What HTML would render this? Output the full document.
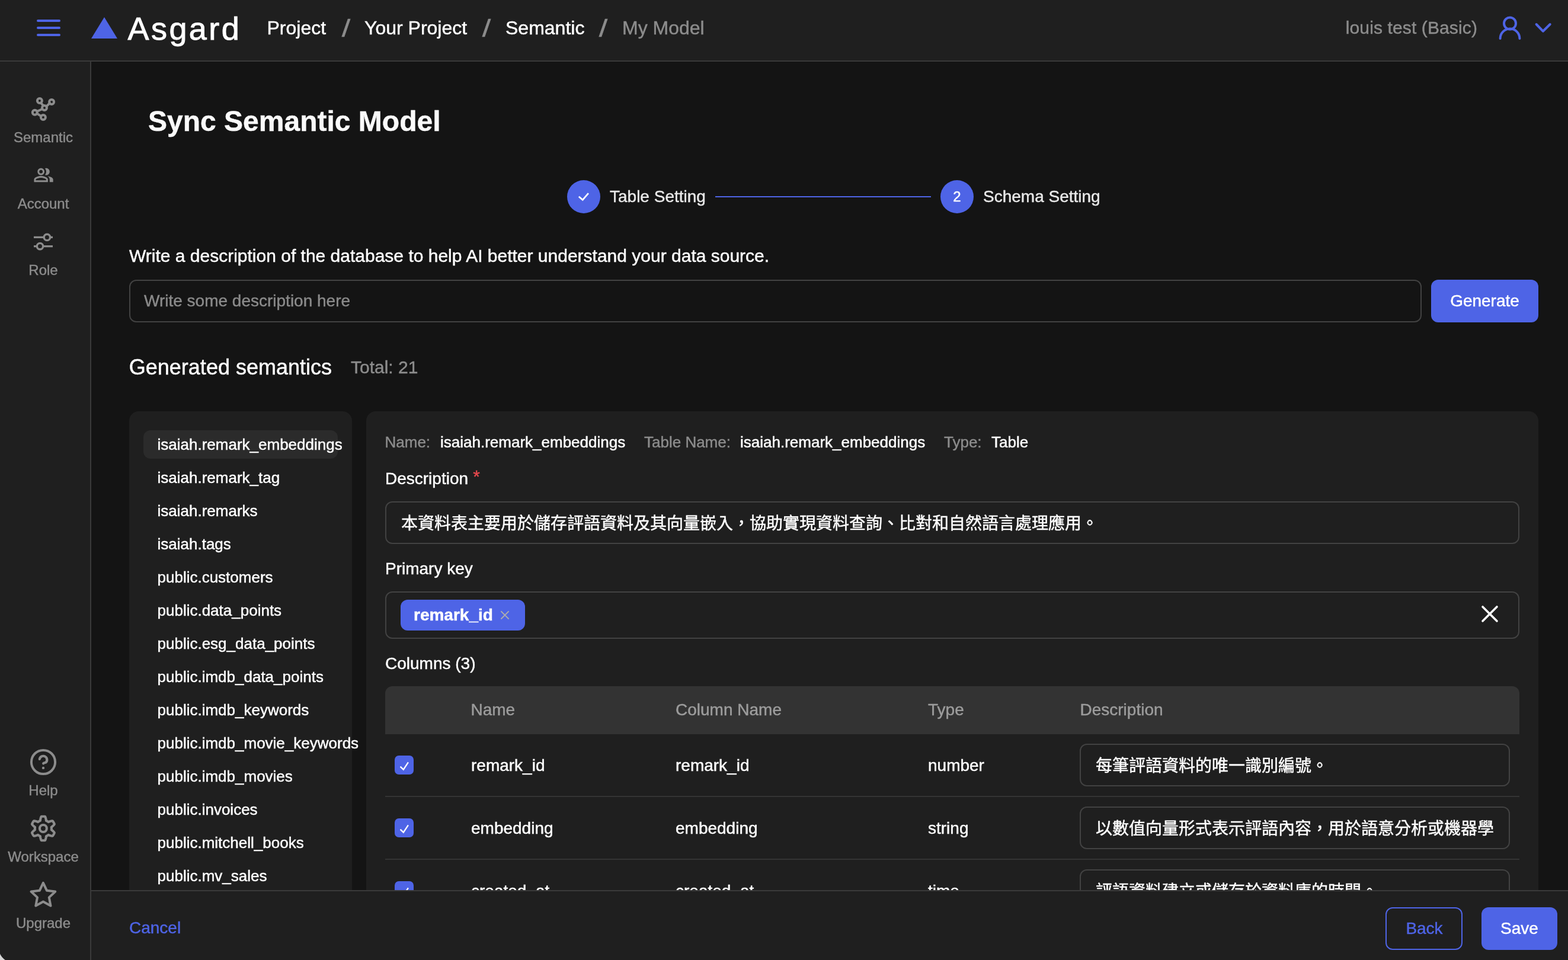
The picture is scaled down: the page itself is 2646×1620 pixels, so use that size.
<!DOCTYPE html>
<html lang="en">
<head>
<meta charset="utf-8">
<title>Asgard - Sync Semantic Model</title>
<style>
*{box-sizing:border-box;margin:0;padding:0}
html,body{width:2646px;height:1620px;overflow:hidden;background:#141414;}
body{position:relative;font-family:"Liberation Sans", "Noto Sans CJK TC", sans-serif;color:#fff;-webkit-font-smoothing:antialiased;}
.t{position:absolute;white-space:nowrap;-webkit-text-stroke:0.45px;}
.b{position:absolute;}
svg{position:absolute;overflow:visible}
.inp{border:2px solid #424242;border-radius:12px;}
</style>
</head>
<body>
<div id="app" style="position:absolute;left:0;top:0;width:2646px;height:1620px;will-change:transform;">

<main>
<div class="b" style="left:957px;top:304px;width:56px;height:56px;border-radius:50%;background:#4e64e6"></div>
<svg style="left:957px;top:304px" width="56" height="56" viewBox="0 0 56 56"><path d="M19.8 27.8 L26.2 33.3 L35.9 22.2" fill="none" stroke="#fff" stroke-width="2.8" stroke-linecap="butt" stroke-linejoin="miter"/></svg>
<div class="t " style="top:310.90px;font-size:28px;line-height:42px;color:#e8e8e8;left:1029px;">Table Setting</div>
<div class="b " style="left:1207px;top:331px;width:364px;height:2px;background:#4e64e6"></div>
<div class="b" style="left:1587px;top:304px;width:56px;height:56px;border-radius:50%;background:#4e64e6"></div>
<div class="t " style="top:314.28px;font-size:24px;line-height:36px;color:#fff;left:1215px;width:800px;text-align:center;">2</div>
<div class="t " style="top:310.90px;font-size:28px;line-height:42px;color:#e8e8e8;left:1659px;">Schema Setting</div>
<div class="t " style="top:168.97px;font-size:48px;line-height:72px;color:#fafafa;font-weight:700;left:250px;">Sync Semantic Model</div>
<div class="t " style="top:409.41px;font-size:30px;line-height:45px;color:#fff;left:218px;">Write a description of the database to help AI better understand your data source.</div>
<div class="b inp" style="left:218px;top:472px;width:2181px;height:72px;"></div>
<div class="t " style="top:487.10px;font-size:28px;line-height:42px;color:#8a8a8a;left:243px;">Write some description here</div>
<div class="b " style="left:2415px;top:472px;width:181px;height:72px;background:#4e64e6;border-radius:12px"></div>
<div class="t " style="top:486.70px;font-size:28px;line-height:42px;color:#fff;left:2105.5px;width:800px;text-align:center;">Generate</div>
<div class="t " style="top:593.03px;font-size:36px;line-height:54px;color:#fff;left:217.8px;">Generated semantics</div>
<div class="t " style="top:597.11px;font-size:30px;line-height:45px;color:#8c8c8c;left:592px;">Total: 21</div>
<div class="b " style="left:218px;top:694px;width:376px;height:900px;background:#1f1f1f;border-radius:16px"></div>
<div class="b " style="left:242px;top:726px;width:328px;height:48px;background:#2b2b2b;border-radius:12px"></div>
<div class="t " style="top:731.49px;font-size:26px;line-height:39px;color:#fff;left:265.5px;">isaiah.remark_embeddings</div>
<div class="t " style="top:787.49px;font-size:26px;line-height:39px;color:#fff;left:265.5px;">isaiah.remark_tag</div>
<div class="t " style="top:843.49px;font-size:26px;line-height:39px;color:#fff;left:265.5px;">isaiah.remarks</div>
<div class="t " style="top:899.49px;font-size:26px;line-height:39px;color:#fff;left:265.5px;">isaiah.tags</div>
<div class="t " style="top:955.49px;font-size:26px;line-height:39px;color:#fff;left:265.5px;">public.customers</div>
<div class="t " style="top:1011.49px;font-size:26px;line-height:39px;color:#fff;left:265.5px;">public.data_points</div>
<div class="t " style="top:1067.49px;font-size:26px;line-height:39px;color:#fff;left:265.5px;">public.esg_data_points</div>
<div class="t " style="top:1123.49px;font-size:26px;line-height:39px;color:#fff;left:265.5px;">public.imdb_data_points</div>
<div class="t " style="top:1179.49px;font-size:26px;line-height:39px;color:#fff;left:265.5px;">public.imdb_keywords</div>
<div class="t " style="top:1235.49px;font-size:26px;line-height:39px;color:#fff;left:265.5px;">public.imdb_movie_keywords</div>
<div class="t " style="top:1291.49px;font-size:26px;line-height:39px;color:#fff;left:265.5px;">public.imdb_movies</div>
<div class="t " style="top:1347.49px;font-size:26px;line-height:39px;color:#fff;left:265.5px;">public.invoices</div>
<div class="t " style="top:1403.49px;font-size:26px;line-height:39px;color:#fff;left:265.5px;">public.mitchell_books</div>
<div class="t " style="top:1459.49px;font-size:26px;line-height:39px;color:#fff;left:265.5px;">public.mv_sales</div>
<div class="t " style="top:1515.49px;font-size:26px;line-height:39px;color:#fff;left:265.5px;">public.orders</div>
<div class="b " style="left:618px;top:694px;width:1978px;height:900px;background:#1f1f1f;border-radius:16px"></div>
<div class="t " style="top:726.79px;font-size:26px;line-height:39px;color:#8c8c8c;left:649.5px;">Name:</div>
<div class="t " style="top:726.79px;font-size:26px;line-height:39px;color:#fff;left:743px;">isaiah.remark_embeddings</div>
<div class="t " style="top:726.79px;font-size:26px;line-height:39px;color:#8c8c8c;left:1087px;">Table Name:</div>
<div class="t " style="top:726.79px;font-size:26px;line-height:39px;color:#fff;left:1249px;">isaiah.remark_embeddings</div>
<div class="t " style="top:726.79px;font-size:26px;line-height:39px;color:#8c8c8c;left:1593px;">Type:</div>
<div class="t " style="top:726.79px;font-size:26px;line-height:39px;color:#fff;left:1673px;">Table</div>
<div class="t " style="top:787.10px;font-size:28px;line-height:42px;color:#fff;left:650px;">Description</div>
<div class="t " style="top:781.31px;font-size:30px;line-height:45px;color:#e5484d;left:798.3px;">*</div>
<div class="b inp" style="left:650px;top:846px;width:1914px;height:72px;"></div>
<div class="t " style="top:863.00px;font-size:28px;line-height:42px;color:#fff;left:677px;">本資料表主要用於儲存評語資料及其向量嵌入，協助實現資料查詢、比對和自然語言處理應用。</div>
<div class="t " style="top:939.10px;font-size:28px;line-height:42px;color:#fff;left:650px;">Primary key</div>
<div class="b inp" style="left:650px;top:998px;width:1914px;height:80px;"></div>
<div class="b " style="left:676px;top:1012px;width:210px;height:52px;background:#4e64e6;border-radius:12px"></div>
<div class="t " style="top:1017.10px;font-size:28px;line-height:42px;color:#fff;font-weight:700;left:698px;">remark_id</div>
<svg style="left:845px;top:1031px" width="14" height="14" viewBox="0 0 14 14"><path d="M0.4 0.4 L13.6 13.6 M13.6 0.4 L0.4 13.6" stroke="#adadad" stroke-width="2" fill="none"/></svg>
<svg style="left:2500px;top:1022px" width="28" height="28" viewBox="0 0 28 28"><path d="M2 2 L26 26 M26 2 L2 26" stroke="#fff" stroke-width="3.6" stroke-linecap="round" fill="none"/></svg>
<div class="t " style="top:1098.90px;font-size:28px;line-height:42px;color:#fff;left:650px;">Columns (3)</div>
<div class="b " style="left:650px;top:1158px;width:1914px;height:81px;background:#333;border-radius:12px 12px 0 0"></div>
<div class="t " style="top:1176.60px;font-size:28px;line-height:42px;color:#9c9c9c;left:794.5px;">Name</div>
<div class="t " style="top:1176.60px;font-size:28px;line-height:42px;color:#9c9c9c;left:1140px;">Column Name</div>
<div class="t " style="top:1176.60px;font-size:28px;line-height:42px;color:#9c9c9c;left:1566px;">Type</div>
<div class="t " style="top:1176.60px;font-size:28px;line-height:42px;color:#9c9c9c;left:1822.5px;">Description</div>
<div class="b " style="left:650px;top:1343px;width:1914px;height:2px;background:#343434"></div>
<div class="b " style="left:666px;top:1275px;width:32px;height:32px;background:#4e64e6;border-radius:7px"></div>
<svg style="left:666px;top:1275px" width="32" height="32" viewBox="0 0 32 32"><path d="M9.5 18.7 L14.8 23.7 L22.9 11.3" fill="none" stroke="#fff" stroke-width="2.3"/></svg>
<div class="t " style="top:1270.50px;font-size:28px;line-height:42px;color:#fff;left:795px;">remark_id</div>
<div class="t " style="top:1270.50px;font-size:28px;line-height:42px;color:#fff;left:1140px;">remark_id</div>
<div class="t " style="top:1270.50px;font-size:28px;line-height:42px;color:#fff;left:1566px;">number</div>
<div class="b inp" style="left:1822px;top:1255px;width:726px;height:72px;overflow:hidden"></div>
<div class="t " style="top:1272.00px;font-size:28px;line-height:42px;color:#fff;left:1849px;">每筆評語資料的唯一識別編號。</div>
<div class="b " style="left:650px;top:1449px;width:1914px;height:2px;background:#343434"></div>
<div class="b " style="left:666px;top:1381px;width:32px;height:32px;background:#4e64e6;border-radius:7px"></div>
<svg style="left:666px;top:1381px" width="32" height="32" viewBox="0 0 32 32"><path d="M9.5 18.7 L14.8 23.7 L22.9 11.3" fill="none" stroke="#fff" stroke-width="2.3"/></svg>
<div class="t " style="top:1376.50px;font-size:28px;line-height:42px;color:#fff;left:795px;">embedding</div>
<div class="t " style="top:1376.50px;font-size:28px;line-height:42px;color:#fff;left:1140px;">embedding</div>
<div class="t " style="top:1376.50px;font-size:28px;line-height:42px;color:#fff;left:1566px;">string</div>
<div class="b inp" style="left:1822px;top:1361px;width:726px;height:72px;overflow:hidden"></div>
<div class="t " style="top:1378.00px;font-size:28px;line-height:42px;color:#fff;left:1849px;">以數值向量形式表示評語內容，用於語意分析或機器學</div>
<div class="b " style="left:650px;top:1555px;width:1914px;height:2px;background:#343434"></div>
<div class="b " style="left:666px;top:1487px;width:32px;height:32px;background:#4e64e6;border-radius:7px"></div>
<svg style="left:666px;top:1487px" width="32" height="32" viewBox="0 0 32 32"><path d="M9.5 18.7 L14.8 23.7 L22.9 11.3" fill="none" stroke="#fff" stroke-width="2.3"/></svg>
<div class="t " style="top:1482.50px;font-size:28px;line-height:42px;color:#fff;left:795px;">created_at</div>
<div class="t " style="top:1482.50px;font-size:28px;line-height:42px;color:#fff;left:1140px;">created_at</div>
<div class="t " style="top:1482.50px;font-size:28px;line-height:42px;color:#fff;left:1566px;">time</div>
<div class="b inp" style="left:1822px;top:1467px;width:726px;height:72px;overflow:hidden"></div>
<div class="t " style="top:1484.00px;font-size:28px;line-height:42px;color:#fff;left:1849px;">評語資料建立或儲存於資料庫的時間。</div>
</main>
<footer>
<div class="b " style="left:154px;top:1502px;width:2492px;height:118px;background:#1f1f1f;border-top:2px solid #3a3a3a"></div>
<div class="t " style="top:1545.40px;font-size:28px;line-height:42px;color:#4e64e6;left:218px;">Cancel</div>
<div class="b " style="left:2338px;top:1531px;width:130px;height:72px;border:2px solid #4e64e6;border-radius:12px"></div>
<div class="t " style="top:1545.80px;font-size:28px;line-height:42px;color:#4e64e6;left:2003.5px;width:800px;text-align:center;">Back</div>
<div class="b " style="left:2500px;top:1531px;width:128px;height:72px;background:#4e64e6;border-radius:12px"></div>
<div class="t " style="top:1545.80px;font-size:28px;line-height:42px;color:#fff;left:2164px;width:800px;text-align:center;">Save</div>
</footer>
<header>
<div class="b " style="left:0px;top:0px;width:2646px;height:104px;background:#1f1f1f;border-bottom:2px solid #3a3a3a"></div>
<div class="b " style="left:62px;top:33px;width:40px;height:4px;background:#4e64e6;border-radius:2px"></div>
<div class="b " style="left:62px;top:45px;width:40px;height:4px;background:#4e64e6;border-radius:2px"></div>
<div class="b " style="left:62px;top:57px;width:40px;height:4px;background:#4e64e6;border-radius:2px"></div>
<svg style="left:154px;top:29px" width="44" height="36" viewBox="0 0 44 36"><path d="M22 0 L44 36 L0 36 Z" fill="#4e64e6"/></svg>
<div class="t " style="top:8.39px;font-size:54px;line-height:81px;color:#fff;left:215.6px;letter-spacing:3.4px;-webkit-text-stroke:0.9px #fff;">Asgard</div>
<div class="t " style="top:22.91px;font-size:32px;line-height:48px;color:#fff;left:450.5px;">Project</div>
<div class="t " style="top:22.91px;font-size:32px;line-height:48px;color:#fff;left:615px;">Your Project</div>
<div class="t " style="top:22.91px;font-size:32px;line-height:48px;color:#fff;left:853px;">Semantic</div>
<div class="t " style="top:22.91px;font-size:32px;line-height:48px;color:#8c8c8c;left:1050px;">My Model</div>
<div class="t " style="top:17.64px;font-size:40px;line-height:60px;color:#8c8c8c;left:184px;width:800px;text-align:center;transform:scaleX(1.3);-webkit-text-stroke:0.5px #8c8c8c;">/</div>
<div class="t " style="top:17.64px;font-size:40px;line-height:60px;color:#8c8c8c;left:421px;width:800px;text-align:center;transform:scaleX(1.3);-webkit-text-stroke:0.5px #8c8c8c;">/</div>
<div class="t " style="top:17.64px;font-size:40px;line-height:60px;color:#8c8c8c;left:618px;width:800px;text-align:center;transform:scaleX(1.3);-webkit-text-stroke:0.5px #8c8c8c;">/</div>
<div class="t " style="top:24.11px;font-size:30px;line-height:45px;color:#8c8c8c;right:153px;letter-spacing:0.12px;">louis test (Basic)</div>
<svg style="left:2526px;top:23px" width="44" height="48" viewBox="0 0 44 48"><circle cx="22" cy="16.5" r="10" fill="none" stroke="#4e64e6" stroke-width="4"/><path d="M5.6 42 A16.4 16.4 0 0 1 38.4 42" fill="none" stroke="#4e64e6" stroke-width="4" stroke-linecap="round"/></svg>
<svg style="left:2588px;top:36px" width="32" height="22" viewBox="0 0 32 22"><path d="M4.6 5 L15.8 16.7 L27.7 5" fill="none" stroke="#4e64e6" stroke-width="4" stroke-linecap="round" stroke-linejoin="round"/></svg>
</header>
<aside>
<div class="b " style="left:0px;top:104px;width:154px;height:1516px;background:#1f1f1f;border-right:2px solid #3a3a3a"></div>
<svg style="left:0px;top:130px" width="152" height="110" viewBox="0 130 152 110">
<g fill="none" stroke="#8c8c8c" stroke-width="4" stroke-linecap="round">
<path d="M68.8 173.6 L73.2 178.2 M84 174 L78.2 179.6 M71.4 184 L62.4 188 M62.2 191.4 L69.4 196.2"/>
<circle cx="66.9" cy="170" r="4"/><circle cx="87.1" cy="171.9" r="4"/><circle cx="75" cy="181.9" r="4"/><circle cx="58.8" cy="189.8" r="4"/><circle cx="72.9" cy="198.1" r="4"/>
</g></svg>
<div class="t " style="top:214.08px;font-size:24px;line-height:36px;color:#8c8c8c;left:-327px;width:800px;text-align:center;">Semantic</div>
<svg style="left:55.5px;top:277.9px" width="35.1" height="35.1" viewBox="0 0 24 24"><path fill="#8c8c8c" d="M16.67 13.13C18.04 14.06 19 15.32 19 17v3h4v-3c0-2.18-3.57-3.47-6.33-3.87zM15 12c2.21 0 4-1.79 4-4s-1.79-4-4-4c-.47 0-.91.1-1.33.24C14.5 5.27 15 6.58 15 8s-.5 2.73-1.33 3.76c.42.14.86.24 1.33.24zM9 12c2.21 0 4-1.79 4-4s-1.790-4-4-4-4 1.79-4 4 1.79 4 4 4zm0-6c1.1 0 2 .9 2 2s-.9 2-2 2-2-.9-2-2 .9-2 2-2zM9 13c-2.67 0-8 1.34-8 4v3h16v-3c0-2.66-5.33-4-8-4zm6 5H3v-.99C3.2 16.29 6.3 15 9 15s5.8 1.29 6 2v1z"/></svg>
<div class="t " style="top:326.08px;font-size:24px;line-height:36px;color:#8c8c8c;left:-327px;width:800px;text-align:center;">Account</div>
<svg style="left:0px;top:380px" width="152" height="60" viewBox="0 380 152 60"><g fill="none" stroke="#8c8c8c" stroke-width="3.4">
<path d="M57 400.4 H74.2 M84.6 400.4 H89 M57 415.6 H62.3 M72.7 415.6 H89"/>
<circle cx="79.4" cy="400.4" r="5.2"/><circle cx="67.5" cy="415.6" r="5.2"/></g></svg>
<div class="t " style="top:438.08px;font-size:24px;line-height:36px;color:#8c8c8c;left:-327px;width:800px;text-align:center;">Role</div>
<svg style="left:0px;top:1260px" width="152" height="60" viewBox="0 1260 152 60"><g fill="none" stroke="#8c8c8c" stroke-width="4" stroke-linecap="round">
<circle cx="73" cy="1286" r="20.1"/>
<path d="M66.8 1281 A6.3 6.3 0 1 1 77.4 1286.6 Q73.6 1287.8 73.2 1288.3" stroke-width="4.2"/></g><circle cx="73" cy="1295.9" r="2.2" fill="#8c8c8c"/></svg>
<div class="t " style="top:1316.08px;font-size:24px;line-height:36px;color:#8c8c8c;left:-327px;width:800px;text-align:center;">Help</div>
<svg style="left:0px;top:1370px" width="152" height="60" viewBox="0 1370 152 60"><g fill="none" stroke="#8c8c8c" stroke-width="4.1" stroke-linejoin="round">
<path d="M72.90 1377.70 L73.25 1377.70 L73.61 1377.71 L73.96 1377.73 L74.32 1377.75 L74.67 1377.78 L75.02 1377.81 L75.37 1377.85 L75.73 1377.90 L76.08 1377.95 L76.34 1378.47 L76.59 1379.03 L76.81 1379.61 L77.01 1380.20 L77.18 1380.82 L77.34 1381.43 L77.47 1382.05 L77.59 1382.66 L77.69 1383.26 L77.77 1383.84 L77.85 1384.40 L77.92 1384.93 L78.14 1385.02 L78.37 1385.11 L78.59 1385.21 L78.82 1385.31 L79.04 1385.42 L79.26 1385.53 L79.47 1385.64 L79.69 1385.76 L79.90 1385.88 L80.11 1386.00 L80.32 1386.13 L80.52 1386.26 L80.73 1386.39 L80.93 1386.53 L81.13 1386.67 L81.33 1386.82 L81.52 1386.97 L81.71 1387.12 L82.20 1386.91 L82.72 1386.70 L83.27 1386.48 L83.84 1386.27 L84.42 1386.07 L85.03 1385.87 L85.64 1385.70 L86.26 1385.54 L86.87 1385.42 L87.49 1385.32 L88.09 1385.26 L88.67 1385.23 L88.90 1385.50 L89.11 1385.78 L89.32 1386.07 L89.53 1386.36 L89.73 1386.65 L89.93 1386.94 L90.12 1387.24 L90.30 1387.54 L90.48 1387.85 L90.65 1388.16 L90.82 1388.47 L90.99 1388.78 L91.15 1389.10 L91.30 1389.42 L91.44 1389.74 L91.59 1390.07 L91.72 1390.40 L91.85 1390.73 L91.53 1391.22 L91.18 1391.71 L90.78 1392.19 L90.37 1392.66 L89.92 1393.12 L89.47 1393.56 L89.00 1393.99 L88.53 1394.39 L88.06 1394.78 L87.60 1395.14 L87.15 1395.49 L86.73 1395.81 L86.76 1396.05 L86.80 1396.29 L86.82 1396.54 L86.85 1396.78 L86.87 1397.02 L86.88 1397.27 L86.89 1397.51 L86.90 1397.76 L86.90 1398.00 L86.90 1398.24 L86.89 1398.49 L86.88 1398.73 L86.87 1398.98 L86.85 1399.22 L86.82 1399.46 L86.80 1399.71 L86.76 1399.95 L86.73 1400.19 L87.15 1400.51 L87.60 1400.86 L88.06 1401.22 L88.53 1401.61 L89.00 1402.01 L89.47 1402.44 L89.92 1402.88 L90.37 1403.34 L90.78 1403.81 L91.18 1404.29 L91.53 1404.78 L91.85 1405.27 L91.72 1405.60 L91.59 1405.93 L91.44 1406.26 L91.30 1406.58 L91.15 1406.90 L90.99 1407.22 L90.82 1407.53 L90.65 1407.84 L90.48 1408.15 L90.30 1408.46 L90.12 1408.76 L89.93 1409.06 L89.73 1409.35 L89.53 1409.64 L89.32 1409.93 L89.11 1410.22 L88.90 1410.50 L88.67 1410.77 L88.09 1410.74 L87.49 1410.68 L86.87 1410.58 L86.26 1410.46 L85.64 1410.30 L85.03 1410.13 L84.42 1409.93 L83.84 1409.73 L83.27 1409.52 L82.72 1409.30 L82.20 1409.09 L81.71 1408.88 L81.52 1409.03 L81.33 1409.18 L81.13 1409.33 L80.93 1409.47 L80.73 1409.61 L80.52 1409.74 L80.32 1409.87 L80.11 1410.00 L79.90 1410.12 L79.69 1410.24 L79.47 1410.36 L79.26 1410.47 L79.04 1410.58 L78.82 1410.69 L78.59 1410.79 L78.37 1410.89 L78.14 1410.98 L77.92 1411.07 L77.85 1411.60 L77.77 1412.16 L77.69 1412.74 L77.59 1413.34 L77.47 1413.95 L77.34 1414.57 L77.18 1415.18 L77.01 1415.80 L76.81 1416.39 L76.59 1416.97 L76.34 1417.53 L76.08 1418.05 L75.73 1418.10 L75.37 1418.15 L75.02 1418.19 L74.67 1418.22 L74.32 1418.25 L73.96 1418.27 L73.61 1418.29 L73.25 1418.30 L72.90 1418.30 L72.55 1418.30 L72.19 1418.29 L71.84 1418.27 L71.48 1418.25 L71.13 1418.22 L70.78 1418.19 L70.43 1418.15 L70.07 1418.10 L69.72 1418.05 L69.46 1417.53 L69.21 1416.97 L68.99 1416.39 L68.79 1415.80 L68.62 1415.18 L68.46 1414.57 L68.33 1413.95 L68.21 1413.34 L68.11 1412.74 L68.03 1412.16 L67.95 1411.60 L67.88 1411.07 L67.66 1410.98 L67.43 1410.89 L67.21 1410.79 L66.98 1410.69 L66.76 1410.58 L66.54 1410.47 L66.33 1410.36 L66.11 1410.24 L65.90 1410.12 L65.69 1410.00 L65.48 1409.87 L65.28 1409.74 L65.07 1409.61 L64.87 1409.47 L64.67 1409.33 L64.47 1409.18 L64.28 1409.03 L64.09 1408.88 L63.60 1409.09 L63.08 1409.30 L62.53 1409.52 L61.96 1409.73 L61.38 1409.93 L60.77 1410.13 L60.16 1410.30 L59.54 1410.46 L58.93 1410.58 L58.31 1410.68 L57.71 1410.74 L57.13 1410.77 L56.90 1410.50 L56.69 1410.22 L56.48 1409.93 L56.27 1409.64 L56.07 1409.35 L55.87 1409.06 L55.68 1408.76 L55.50 1408.46 L55.32 1408.15 L55.15 1407.84 L54.98 1407.53 L54.81 1407.22 L54.65 1406.90 L54.50 1406.58 L54.36 1406.26 L54.21 1405.93 L54.08 1405.60 L53.95 1405.27 L54.27 1404.78 L54.62 1404.29 L55.02 1403.81 L55.43 1403.34 L55.88 1402.88 L56.33 1402.44 L56.80 1402.01 L57.27 1401.61 L57.74 1401.22 L58.20 1400.86 L58.65 1400.51 L59.07 1400.19 L59.04 1399.95 L59.00 1399.71 L58.98 1399.46 L58.95 1399.22 L58.93 1398.98 L58.92 1398.73 L58.91 1398.49 L58.90 1398.24 L58.90 1398.00 L58.90 1397.76 L58.91 1397.51 L58.92 1397.27 L58.93 1397.02 L58.95 1396.78 L58.98 1396.54 L59.00 1396.29 L59.04 1396.05 L59.07 1395.81 L58.65 1395.49 L58.20 1395.14 L57.74 1394.78 L57.27 1394.39 L56.80 1393.99 L56.33 1393.56 L55.88 1393.12 L55.43 1392.66 L55.02 1392.19 L54.62 1391.71 L54.27 1391.22 L53.95 1390.73 L54.08 1390.40 L54.21 1390.07 L54.36 1389.74 L54.50 1389.42 L54.65 1389.10 L54.81 1388.78 L54.98 1388.47 L55.15 1388.16 L55.32 1387.85 L55.50 1387.54 L55.68 1387.24 L55.87 1386.94 L56.07 1386.65 L56.27 1386.36 L56.48 1386.07 L56.69 1385.78 L56.90 1385.50 L57.13 1385.23 L57.71 1385.26 L58.31 1385.32 L58.93 1385.42 L59.54 1385.54 L60.16 1385.70 L60.77 1385.87 L61.38 1386.07 L61.96 1386.27 L62.53 1386.48 L63.08 1386.70 L63.60 1386.91 L64.09 1387.12 L64.28 1386.97 L64.47 1386.82 L64.67 1386.67 L64.87 1386.53 L65.07 1386.39 L65.28 1386.26 L65.48 1386.13 L65.69 1386.00 L65.90 1385.88 L66.11 1385.76 L66.33 1385.64 L66.54 1385.53 L66.76 1385.42 L66.98 1385.31 L67.21 1385.21 L67.43 1385.11 L67.66 1385.02 L67.88 1384.93 L67.95 1384.40 L68.03 1383.84 L68.11 1383.26 L68.21 1382.66 L68.33 1382.05 L68.46 1381.43 L68.62 1380.82 L68.79 1380.20 L68.99 1379.61 L69.21 1379.03 L69.46 1378.47 L69.72 1377.95 L70.07 1377.90 L70.43 1377.85 L70.78 1377.81 L71.13 1377.78 L71.48 1377.75 L71.84 1377.73 L72.19 1377.71 L72.55 1377.70 L72.90 1377.70Z"/><circle cx="72.9" cy="1398" r="5.95"/></g></svg>
<div class="t " style="top:1428.08px;font-size:24px;line-height:36px;color:#8c8c8c;left:-327px;width:800px;text-align:center;">Workspace</div>
<svg style="left:0px;top:1480px" width="152" height="60" viewBox="0 1480 152 60"><path d="M72.90 1489.80 L79.01 1502.79 L93.25 1504.59 L82.79 1514.41 L85.48 1528.51 L72.90 1521.60 L60.32 1528.51 L63.01 1514.41 L52.55 1504.59 L66.79 1502.79Z" fill="none" stroke="#8c8c8c" stroke-width="4" stroke-linejoin="round"/></svg>
<div class="t " style="top:1539.88px;font-size:24px;line-height:36px;color:#8c8c8c;left:-327px;width:800px;text-align:center;">Upgrade</div>
</aside>
<svg style="left:0px;top:1600px" width="20" height="20" viewBox="0 0 20 20"><path d="M0 9.5 Q2.6 15.6 8.8 20 L0 20 Z" fill="#d6d6d6"/></svg>
</div>
</body>
</html>
